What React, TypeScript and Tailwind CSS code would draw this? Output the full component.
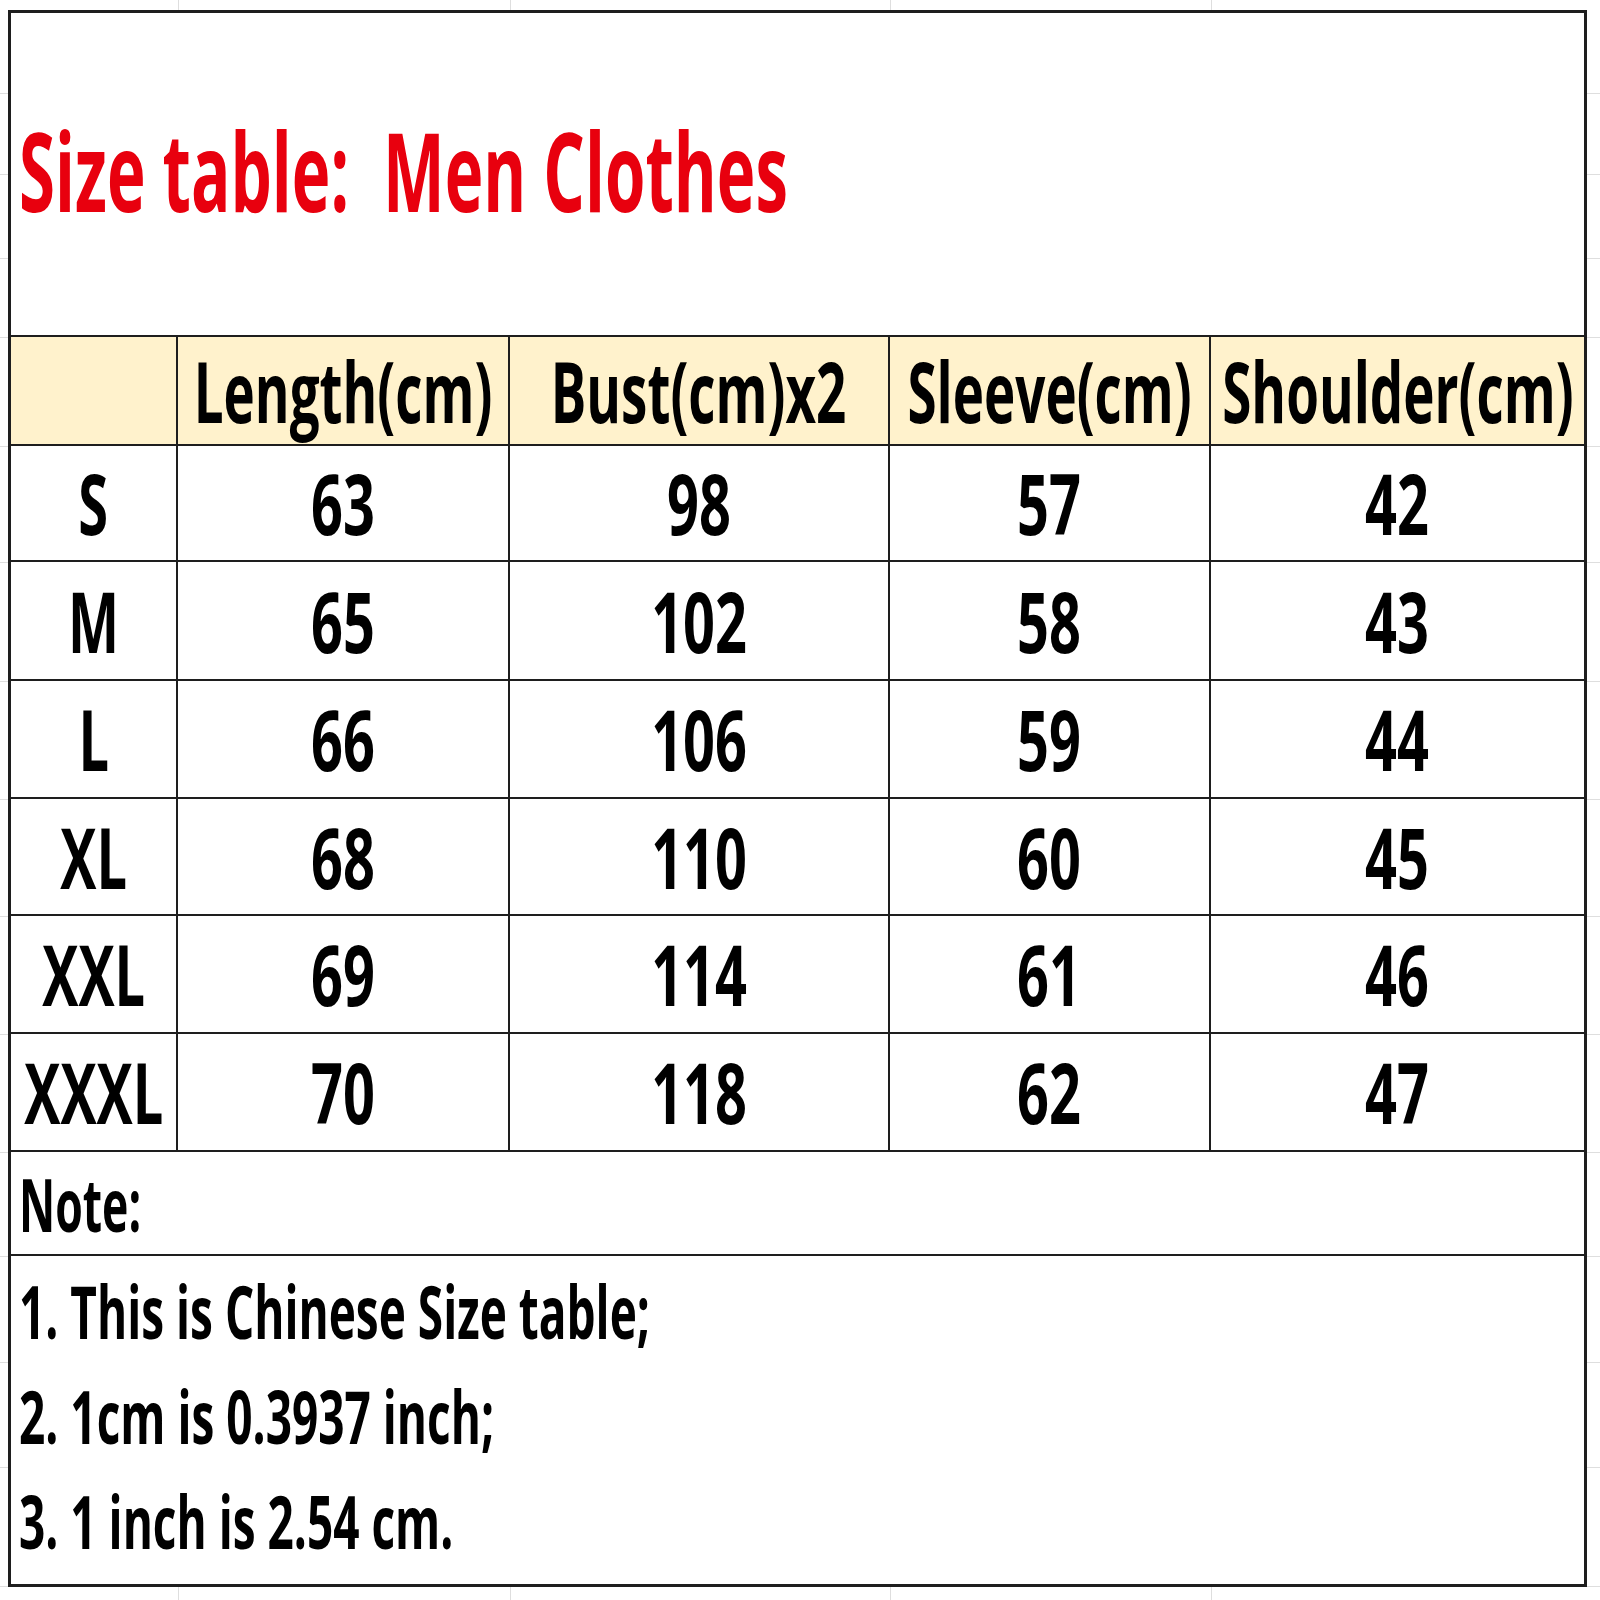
const sizes = [
  { size: "S", h: "h-[116px]", v: ["63", "98", "57", "42"] },
  { size: "M", h: "h-[119px]", v: ["65", "102", "58", "43"] },
  { size: "L", h: "h-[118px]", v: ["66", "106", "59", "44"] },
  { size: "XL", h: "h-[117px]", v: ["68", "110", "60", "45"] },
  { size: "XXL", h: "h-[118px]", v: ["69", "114", "61", "46"] },
  { size: "XXXL", h: "h-[118px]", v: ["70", "118", "62", "47"] },
];

const headers = ["Length(cm)", "Bust(cm)x2", "Sleeve(cm)", "Shoulder(cm)"];

const gridX = [178, 510, 890, 1211];
const gridY = [93, 174, 258, 337, 446, 562, 681, 799, 916, 1034, 1152, 1256, 1362, 1467, 1586];

const font = { fontFamily: '"Open Sans", "Liberation Sans", sans-serif' };

const cols = "grid grid-cols-[167px_332px_380px_321px_373px]";

function Cell({ text, last, kind }: { text: string; last?: boolean; kind: "head" | "size" | "num" }) {
  const sx = kind === "head" ? "scale-x-[0.63]" : kind === "size" ? "scale-x-[0.645]" : "scale-x-[0.665]";
  return (
    <div className={`min-w-0 flex items-center justify-center overflow-visible ${last ? "" : "border-r-2 border-[#1e1e1e]"}`}>
      <span className={`inline-block whitespace-nowrap ${sx} text-[84px] leading-none font-bold text-black`}>{text}</span>
    </div>
  );
}

export default function App() {
  return (
    <div className="relative w-[1600px] h-[1600px] bg-white overflow-hidden" style={font}>
      {/* faint spreadsheet grid behind the table */}
      {gridX.map((x) => (
        <div key={"x" + x} className="absolute top-0 bottom-0 w-px bg-[#dedede]" style={{ left: x }} />
      ))}
      {gridY.map((y) => (
        <div key={"y" + y} className="absolute left-0 right-0 h-px bg-[#dedede]" style={{ top: y }} />
      ))}

      <div className="relative z-10 ml-[8px] mt-[10px] w-[1579px] border-[3px] border-[#1e1e1e] bg-white">
        {/* title */}
        <div className="h-[324px] flex items-center pl-[8px] pb-[9px] border-b-2 border-[#1e1e1e]">
          <span className="inline-block origin-left whitespace-pre scale-x-[0.6] text-[109px] leading-none font-bold text-[#e8000e]">
            {"Size table:  Men Clothes"}
          </span>
        </div>

        {/* header */}
        <div className={`${cols} h-[109px] bg-[#fff2cc] border-b-2 border-[#1e1e1e]`}>
          <div className="border-r-2 border-[#1e1e1e]" />
          {headers.map((t, i) => (
            <Cell key={t} text={t} kind="head" last={i === headers.length - 1} />
          ))}
        </div>

        {/* data rows */}
        {sizes.map((r) => (
          <div key={r.size} className={`${cols} ${r.h} border-b-2 border-[#1e1e1e]`}>
            <Cell text={r.size} kind="size" />
            {r.v.map((n, i) => (
              <Cell key={i} text={n} kind="num" last={i === r.v.length - 1} />
            ))}
          </div>
        ))}

        {/* note */}
        <div className="h-[104px] flex items-center pl-[8px] border-b-2 border-[#1e1e1e]">
          <span className="inline-block origin-left scale-x-[0.61] text-[73px] leading-none font-bold text-black">Note:</span>
        </div>

        <div className="h-[328px] flex flex-col pt-[2px] pl-[8px]">
          {["1. This is Chinese Size table;", "2. 1cm is 0.3937 inch;", "3. 1 inch is 2.54 cm."].map((l) => (
            <div key={l} className="h-[105px] flex items-center">
              <span className="inline-block origin-left whitespace-pre scale-x-[0.63] text-[73px] leading-none font-bold text-black">{l}</span>
            </div>
          ))}
        </div>
      </div>
    </div>
  );
}
